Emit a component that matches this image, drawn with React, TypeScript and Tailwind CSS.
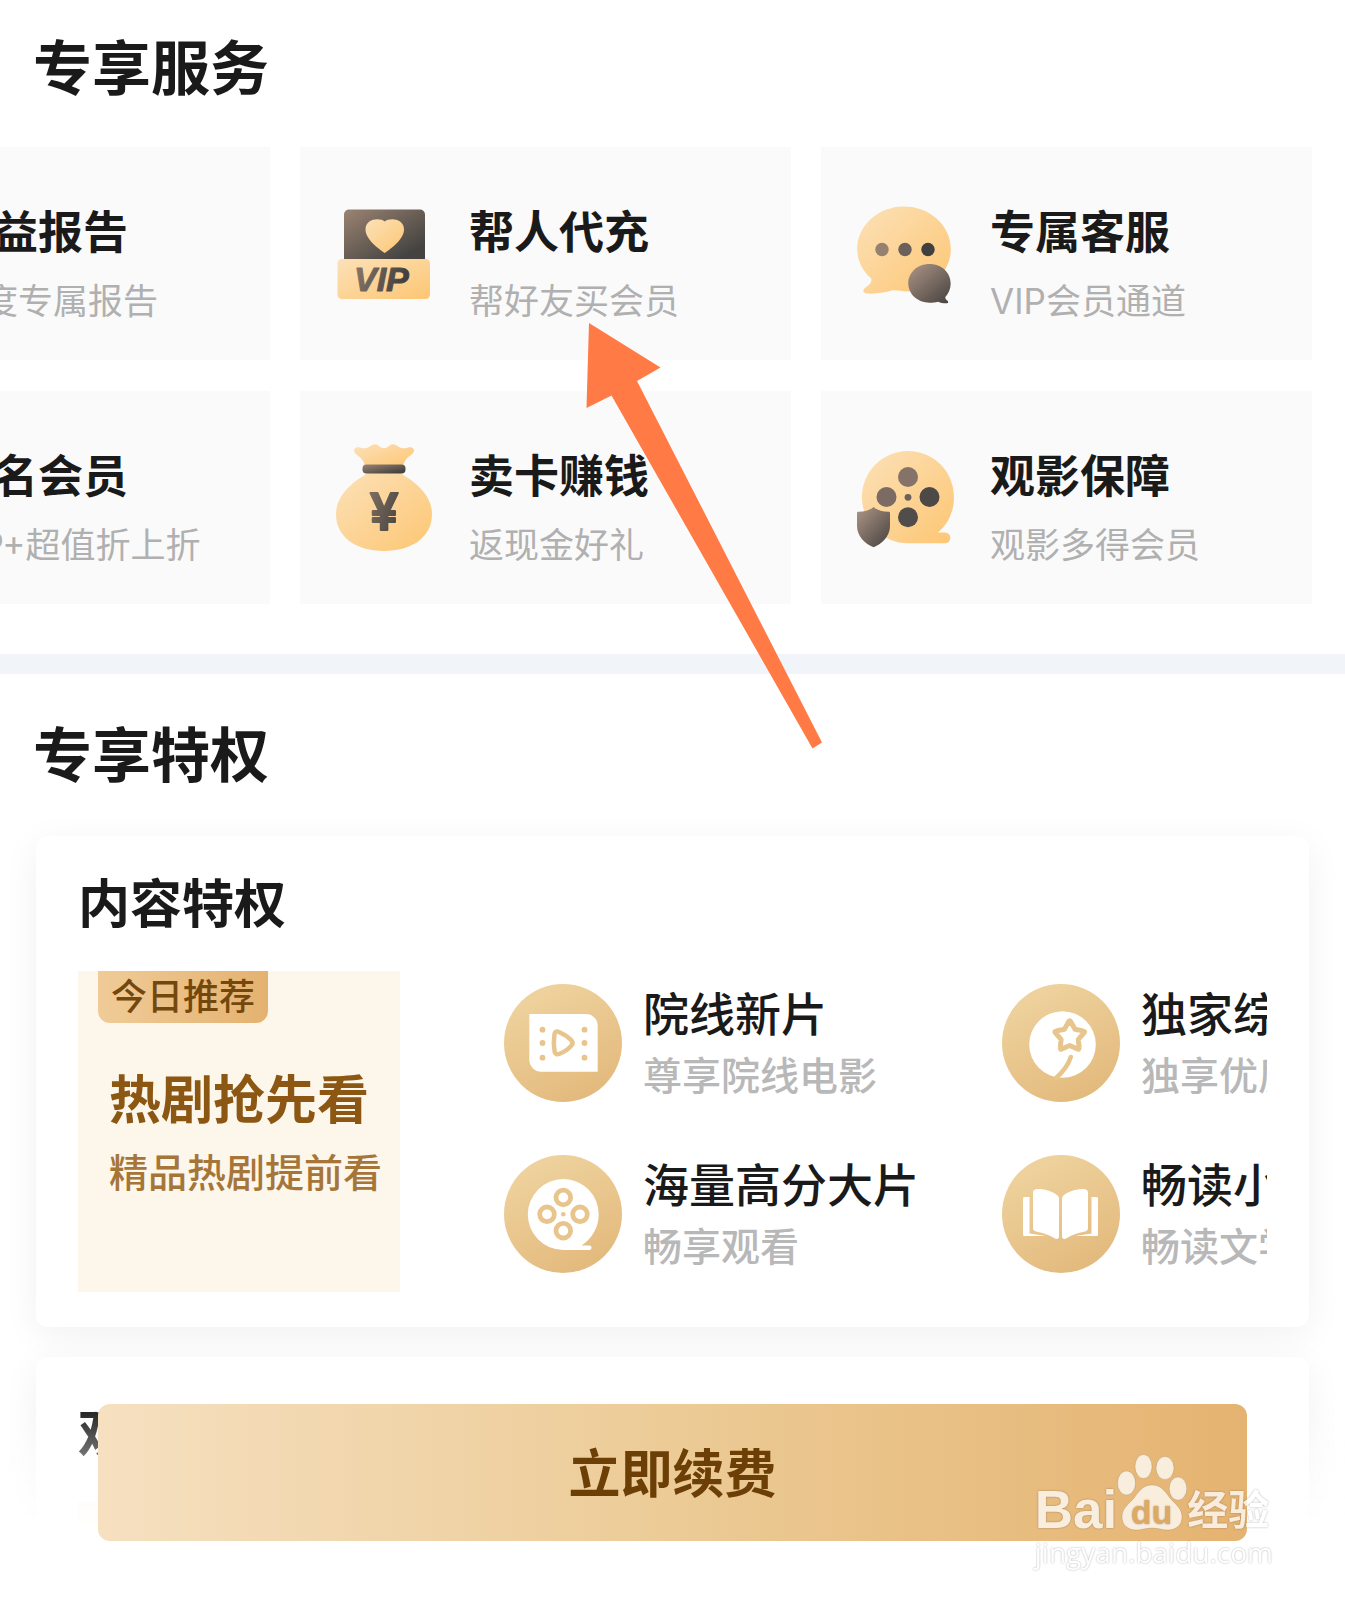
import type { ReactNode } from 'react';

// ── Icon gradients, shared by every drawing on the page ───────────────────────
function Gradients() {
  return (
    <svg className="absolute h-0 w-0" aria-hidden="true">
      <defs>
        <linearGradient id="gold" x1="0" y1="0" x2="1" y2="1">
          <stop offset="0" stopColor="#fce1b8" />
          <stop offset="1" stopColor="#fdc673" />
        </linearGradient>
        <linearGradient id="dark" x1="0" y1="0" x2="1" y2="1">
          <stop offset="0.05" stopColor="#96806f" />
          <stop offset="0.85" stopColor="#444341" />
        </linearGradient>
        <linearGradient id="brown" x1="0.1" y1="0.1" x2="0.9" y2="1">
          <stop offset="0" stopColor="#a38d80" />
          <stop offset="1" stopColor="#4a4541" />
        </linearGradient>
        <linearGradient id="darkWide" gradientUnits="userSpaceOnUse" x1="18" y1="40" x2="76" y2="60">
          <stop offset="0" stopColor="#96806f" />
          <stop offset="1" stopColor="#41403e" />
        </linearGradient>
        <linearGradient id="coin" x1="0.2" y1="0" x2="0.7" y2="1">
          <stop offset="0" stopColor="#efd4a0" />
          <stop offset="1" stopColor="#e3b97c" />
        </linearGradient>
      </defs>
    </svg>
  );
}

// ── Service icons ─────────────────────────────────────────────────────────────
function ServiceIcon({ children }: { children: ReactNode }) {
  return (
    <svg viewBox="0 0 98 108" className="h-[108px] w-[98px] shrink-0" aria-hidden="true">
      {children}
    </svg>
  );
}

const vipIcon = (
  <ServiceIcon>
    <path d="M8 60V14.500a5 5 0 0 1 5-5h71a5 5 0 0 1 5 5V60z" fill="url(#dark)" />
    <path
      d="M48.700 53C43 49 29.500 39.500 29.500 29.500 29.500 22 36 19.300 41 19.300c3.500 0 6 .9 7.700 2.200 1.800-1.300 4.300-2.200 7.800-2.200 5 0 11.500 2.700 11.500 10.200C68 39.500 54.500 49 48.700 53z"
      fill="url(#gold)"
    />
    <rect x="1.500" y="59" width="92.500" height="40" rx="4.500" fill="url(#gold)" />
    <text
      x="18"
      y="91"
      fill="url(#darkWide)"
      stroke="url(#darkWide)"
      strokeWidth="1"
      strokeLinejoin="round"
      className="font-['Liberation_Sans'] text-[34px] font-bold italic"
    >
      VIP
    </text>
  </ServiceIcon>
);

const chatIcon = (
  <ServiceIcon>
    <path
      d="M47 6.500c26 0 46.800 19 46.800 42.500S73 91.500 50 91.500c-6 0-10-1.700-15-1-8 1.800-17 3.700-25 3-4-.5-5-3-2-5.500 4-3 7-5 6.300-9.500C5 70.500.2 60 .2 49 .2 25.500 21 6.500 47 6.500z"
      fill="url(#gold)"
    />
    <circle cx="25" cy="49.500" r="6.700" fill="#96806f" />
    <circle cx="48" cy="49.500" r="6.700" fill="#6c615a" />
    <circle cx="71" cy="49.500" r="6.700" fill="#41403e" />
    <path
      d="M72.500 64c12 0 21.200 8.500 21.200 19.300 0 5.500-2.200 10.500-5.500 14 .2 2.200 1.200 2.700 2.600 3.700.8 1.200.4 2-.8 2.300-3 .3-6-.4-9-1.600-2.500.6-5.500 1-8.500 1-12 0-21.200-8.600-21.200-19.400S60.500 64 72.500 64z"
      fill="url(#brown)"
    />
  </ServiceIcon>
);

const bagIcon = (
  <ServiceIcon>
    <path
      d="M29 22c-1-5-4-8.500-8-11-3-2-3.500-4.500-2.500-6 1-1.800 3.500-2 6-1.200C30 5.500 33 3 36.500.8c2-1 4.500-.8 6 .7 3.500 3.500 7.500 3.500 11 0 1.500-1.500 4-1.700 6-.7C63 3 66 5.500 71.500 3.800c2.500-.8 5-.6 6 1.200 1 1.500.5 4-2.500 6-4 2.500-7 6-8 11z"
      fill="url(#gold)"
    />
    <path
      d="M31 29h34c4 4 10 6 16 12C90 49 96 59 96 70c0 23-20 37-48 37S0 93 0 70c0-11 6-21 15-29 6-6 12-8 16-12z"
      fill="url(#gold)"
    />
    <rect x="26.500" y="20.500" width="43" height="9" rx="4" fill="url(#dark)" />
    <text
      x="48"
      y="86"
      textAnchor="middle"
      fill="url(#darkWide)"
      stroke="url(#darkWide)"
      strokeWidth="2"
      strokeLinejoin="round"
      className="font-['Inter'] text-[51px] font-semibold"
    >
      ¥
    </text>
  </ServiceIcon>
);

const reelIcon = (
  <ServiceIcon>
    <path
      d="M51 7a46 46 0 0 1 46 46.300c0 14-6 27-16 35.200h7a5.300 5.300 0 0 1 0 10.700H51A46 46 0 0 1 51 7z"
      fill="url(#gold)"
    />
    <circle cx="51" cy="33" r="10" fill="#85736a" />
    <circle cx="29.500" cy="53" r="10" fill="#7b6b62" />
    <circle cx="72.500" cy="53" r="10" fill="#4c4946" />
    <circle cx="51" cy="73.300" r="10" fill="#514d4a" />
    <circle cx="51" cy="53.300" r="3.400" fill="#6c615a" />
    <path
      d="M16.600 63c3.500 3.200 8 4.600 15 4.800.9 0 1.400.6 1.400 1.400V82c0 10-8 18-16.400 21.300C8 100 0 92 0 82V69.200c0-.8.500-1.400 1.400-1.400 7-.2 11.600-1.600 15.200-4.800z"
      fill="url(#brown)"
    />
  </ServiceIcon>
);

// ── Privilege icons ───────────────────────────────────────────────────────────
function CoinIcon({ children }: { children: ReactNode }) {
  return (
    <svg viewBox="0 0 118 118" className="h-[118px] w-[118px] shrink-0" aria-hidden="true">
      <circle cx="59" cy="59" r="59" fill="url(#coin)" />
      {children}
    </svg>
  );
}

const filmIcon = (
  <CoinIcon>
    <path d="M25.300 30H82a11.700 11.700 0 0 1 11.700 11.700v46H37.300a12 12 0 0 1-12-12z" fill="#fff" />
    {[45.7, 59, 73.7].map((y) => (
      <g key={y} fill="#e7c58c">
        <circle cx="38.500" cy={y} r="2.900" />
        <circle cx="80.500" cy={y} r="2.900" />
      </g>
    ))}
    <path
      d="M50.500 50c.6-2.500 2.300-3 4.500-2 4.500 2 9 4.800 12.300 8.300 1.600 1.700 1.600 3.600 0 5.300C64 65.500 59.500 68.300 55 70c-2.200.8-3.900 0-4.400-2.500-1-6-1-12-.1-17.500z"
      fill="none"
      stroke="#e7c58c"
      strokeWidth="4.500"
    />
  </CoinIcon>
);

const discIcon = (
  <CoinIcon>
    <path d="M59.300 24a35.400 35.400 0 0 1 35.400 35.400c0 12.500-6.500 24-17.200 31.100h7.800a2.200 2.200 0 0 1 0 4.500h-26a35.500 35.500 0 0 1 0-71z" fill="#fff" />
    <g fill="none" stroke="#e7c58c" strokeWidth="4.800">
      <circle cx="59.300" cy="42.500" r="7.300" />
      <circle cx="43" cy="59.300" r="7.300" />
      <circle cx="76" cy="59.300" r="7.300" />
      <circle cx="59.300" cy="75.700" r="7.300" />
    </g>
    <circle cx="59.300" cy="59.300" r="2.300" fill="#e7c58c" />
  </CoinIcon>
);

const starIcon = (
  <CoinIcon>
    <circle cx="60.500" cy="60.500" r="33.300" fill="#fff" />
    <path
      d="M66.400 38.300Q67.700 35 69 38.300L73 45.200 80.800 46.900Q84 47.400 81.600 49.400L76.300 55.300 77.100 63.200Q77.600 66.500 75 64.700L67.700 61.500 60.400 64.700Q57.800 66.500 58.300 63.200L59.100 55.300 53.800 49.400Q51.400 47.400 54.600 46.900L62.400 45.200z"
      fill="none"
      stroke="#e7c58c"
      strokeWidth="5"
      strokeLinejoin="round"
    />
    <path d="M68.800 73C66.500 80 62 87 54 94" fill="none" stroke="#e7c58c" strokeWidth="4.500" strokeLinecap="round" />
  </CoinIcon>
);

const bookIcon = (
  <CoinIcon>
    <g fill="#fff">
      <path d="M22.500 42h5v36.500L44 81H22.500a1.500 1.500 0 0 1-1.500-1.500v-36A1.500 1.500 0 0 1 22.500 42z" />
      <path d="M94.500 42h-5v36.500L73 81h21.500a1.500 1.500 0 0 0 1.500-1.500v-36a1.500 1.500 0 0 0-1.500-1.500z" />
      <path d="M31 38c0-3 2-4 5-4 7 0 15 2.500 19.500 6.500A4 4 0 0 1 57 44v37.500c0 2-1.500 3-3.500 2.300C46 79 39 77.500 34 76.500c-2-.5-3-1.500-3-3.500z" />
      <path d="M86 38c0-3-2-4-5-4-7 0-15 2.500-19.500 6.500A4 4 0 0 0 60 44v37.500c0 2 1.500 3 3.500 2.300C71 79 78 77.500 83 76.500c2-.5 3-1.500 3-3.500z" />
    </g>
  </CoinIcon>
);

const services = [
  { title: '权益报告', desc: '年度专属报告', icon: vipIcon },
  { title: '帮人代充', desc: '帮好友买会员', icon: vipIcon },
  { title: '专属客服', desc: 'VIP会员通道', icon: chatIcon },
  { title: '联名会员', desc: 'VIP+超值折上折', icon: chatIcon },
  { title: '卖卡赚钱', desc: '返现金好礼', icon: bagIcon },
  { title: '观影保障', desc: '观影多得会员', icon: reelIcon },
];

const privileges = [
  { title: '院线新片', desc: '尊享院线电影', icon: filmIcon },
  { title: '独家综艺', desc: '独享优质综艺', icon: starIcon },
  { title: '海量高分大片', desc: '畅享观看', icon: discIcon },
  { title: '畅读小说', desc: '畅读文学作品', icon: bookIcon },
];

function Watermark() {
  return (
    <div className="pointer-events-none absolute right-[72px] bottom-[28px] text-white opacity-75 [text-shadow:0_0_2px_rgba(0,0,0,0.45)]">
      <div className="flex items-end">
        <span className="font-['Liberation_Sans'] text-[53px] leading-[44px] font-bold">Bai</span>
        <svg viewBox="0 0 70 78" className="h-[78px] w-[70px]" aria-hidden="true">
          <g fill="#fff" stroke="#000" strokeOpacity="0.15">
            <ellipse cx="9.500" cy="29" rx="9" ry="12" />
            <ellipse cx="26.500" cy="12.500" rx="8.500" ry="12" />
            <ellipse cx="48" cy="14" rx="9" ry="11.500" />
            <ellipse cx="61" cy="34.500" rx="8.800" ry="11.500" />
            <path d="M35 31c10 0 14 8 18 13 5 6 12 10 12 19 0 8-6 13-14 13-6 0-10-2-16-2s-10 2-16 2C11 76 5 71 5 63c0-9 7-13 12-19 4-5 8-13 18-13z" />
          </g>
          <text x="34.500" y="70" textAnchor="middle" fill="#dba55c" className="font-['Liberation_Sans'] text-[34px] font-bold">
            du
          </text>
        </svg>
        <span className="text-[41px] leading-[44px] font-bold">经验</span>
      </div>
      <div className="font-['Open_Sans'] text-[28px] leading-[40px]">jingyan.baidu.com</div>
    </div>
  );
}

export default function App() {
  return (
    <div className="relative flex min-h-screen flex-col overflow-hidden bg-white font-['Inter','Noto_Sans_CJK_SC',sans-serif] text-[#1a1a1a]">
      <Gradients />

      {/* ── Services ── */}
      <section className="pt-[37px] pb-[50px]">
        <h1 className="mb-[46px] px-[33px] text-[59px] leading-[64px] font-bold">专享服务</h1>
        <div className="grid grid-cols-[repeat(3,491px)] justify-end gap-x-[30px] gap-y-[31px] pr-[33px]">
          {services.map(({ title, desc, icon }) => (
            <a key={title} href="#service" className="flex h-[213px] items-center gap-[35px] bg-[#fafafa] pl-9">
              {icon}
              <div className="pt-[26px] whitespace-nowrap">
                <h2 className="text-[45px] leading-[64px] font-bold">{title}</h2>
                <p className="mt-1 text-[35px] leading-[64px] text-[#b0b0b0]">{desc}</p>
              </div>
            </a>
          ))}
        </div>
      </section>

      <div className="h-5 bg-[#f1f5fa]" />

      {/* ── Privileges ── */}
      <section className="flex flex-1 flex-col pt-[50px]">
        <h1 className="mb-12 px-[33px] text-[59px] leading-[64px] font-bold">专享特权</h1>

        <div className="mx-9 rounded-xl bg-white px-[42px] pt-[37px] pb-[35px] shadow-[0_8px_36px_rgba(0,0,0,0.06)]">
          <h2 className="mb-[34px] text-[52px] leading-[64px] font-bold">内容特权</h2>
          <div className="flex items-start gap-[104px] overflow-hidden">
            <a href="#today" className="h-[321px] w-[322px] shrink-0 bg-[#fcf6eb] whitespace-nowrap">
              <span className="ml-5 inline-block rounded-b-xl bg-linear-to-r from-[#f0cb97] to-[#e4b270] px-[13px] text-[36px] leading-[52px] font-medium text-[#74470c]">
                今日推荐
              </span>
              <h3 className="mt-[46px] pl-[31px] text-[52px] leading-[64px] font-bold text-[#8b5713]">热剧抢先看</h3>
              <p className="mt-2 pl-[31px] text-[39px] leading-[64px] font-medium text-[#a67538]">精品热剧提前看</p>
            </a>
            <div className="grid grid-cols-[repeat(2,498px)] gap-y-[41px] pt-[7px]">
              {privileges.map(({ title, desc, icon }) => (
                <a key={title} href="#privilege" className="flex items-center gap-[21px] whitespace-nowrap">
                  {icon}
                  <div className="pt-[6px]">
                    <h3 className="text-[46px] leading-[60px] font-medium">{title}</h3>
                    <p className="text-[39px] leading-[64px] font-medium text-[#b8b8b8]">{desc}</p>
                  </div>
                </a>
              ))}
            </div>
          </div>
        </div>

        <div className="mx-9 mt-[30px] flex flex-1 flex-col rounded-t-xl bg-white px-[42px] pt-[46px] shadow-[0_8px_36px_rgba(0,0,0,0.06)]">
          <h2 className="mb-[34px] text-[52px] leading-[64px] font-bold">观影特权</h2>
          <div className="w-[322px] flex-1 bg-[#fcf6eb]" />
        </div>
      </section>

      {/* ── Renew bar ── */}
      <footer className="fixed inset-x-0 bottom-0 bg-linear-to-b from-white/0 to-white to-[67%] px-[98px] pb-[59px]">
        <button
          type="button"
          className="h-[137px] w-full rounded-xl bg-linear-to-r from-[#f6e0c0] via-[#eccb96] to-[#e5b371] pt-1 text-[52px] font-bold text-[#6b3f06]"
        >
          立即续费
        </button>
        <Watermark />
      </footer>

      {/* ── Pointer over the gift card service ── */}
      <svg
        viewBox="0 0 237 426"
        className="pointer-events-none absolute top-[323px] left-[586px] h-[426px] w-[237px]"
        aria-hidden="true"
      >
        <path d="M3 0l71.500 44.500L51 58l185 361.500-9.500 6L25.500 72.500.500 85z" fill="#ff7a45" />
      </svg>
    </div>
  );
}
